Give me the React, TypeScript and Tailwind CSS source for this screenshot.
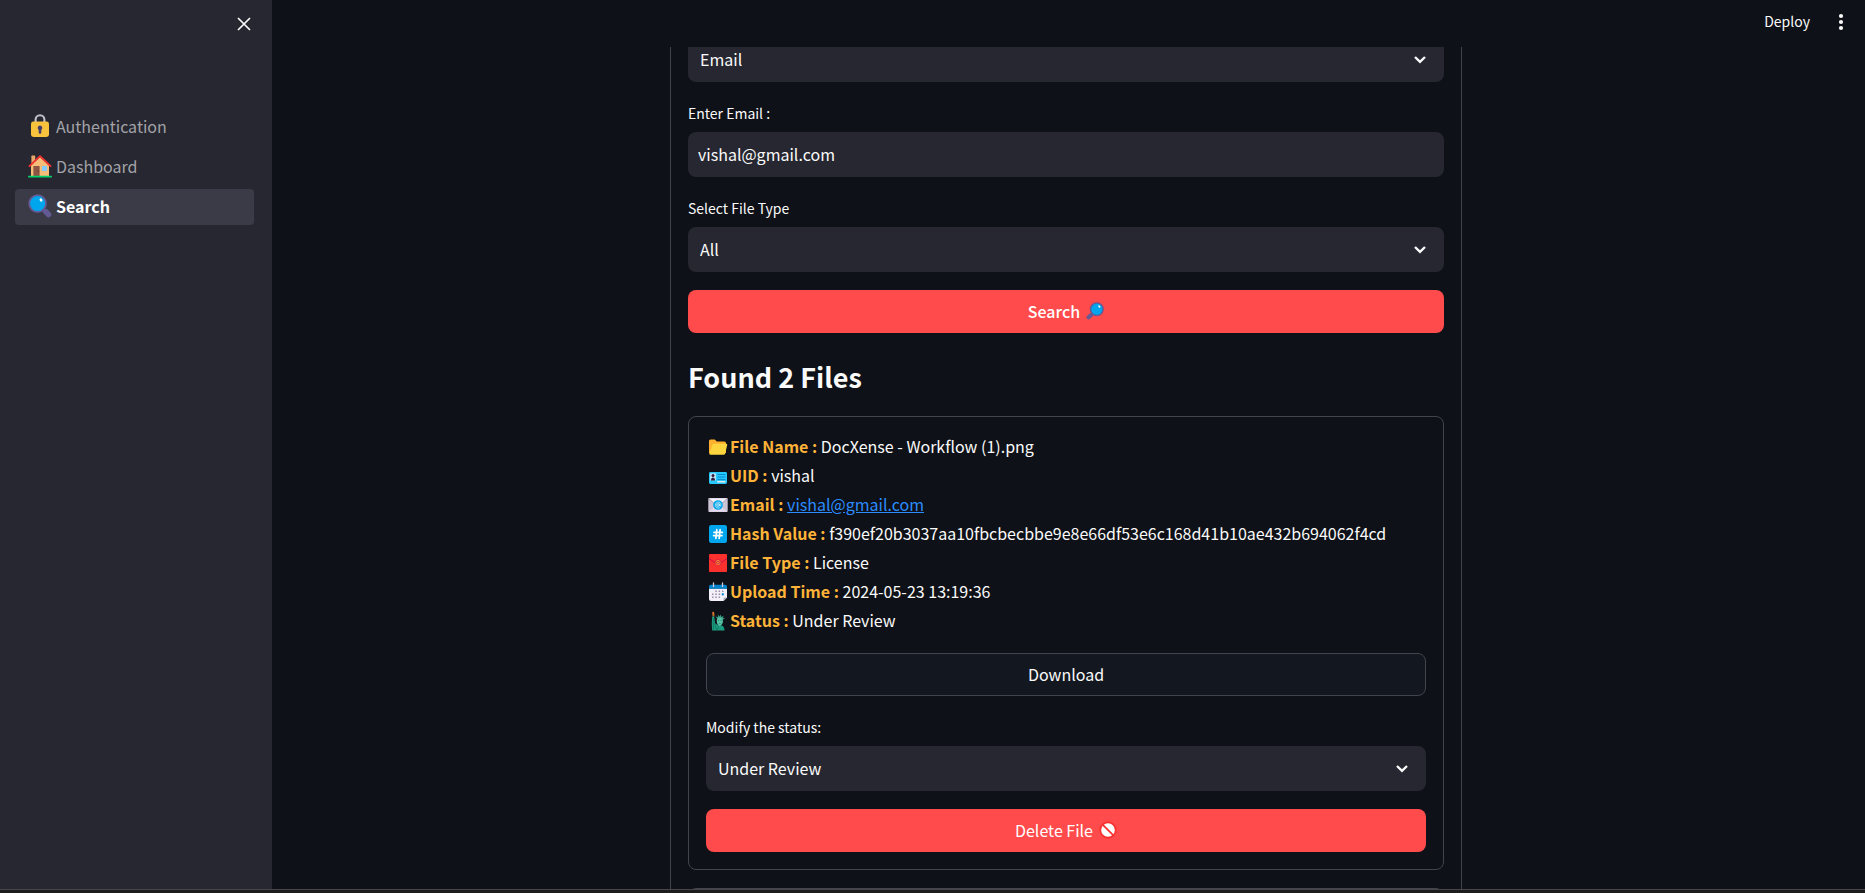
import React, { type ReactNode } from "react";

type IconProps = { className?: string };

function LockIcon({ className }: IconProps) {
  return (
    <svg viewBox="0 0 22 24" className={className} aria-hidden="true">
      <path d="M6.6 10V5.600a4.4 4.4 0 0 1 8.8 0v4.400" fill="none" stroke="#c3c0cb" strokeWidth="2.1" />
      <rect x="2" y="7.5" width="18" height="15.5" rx="2.4" fill="#f9c23c" />
      <path d="M11 11.6a2.3 2.3 0 0 1 1.3 4.2v2.6a1.3 1.3 0 0 1-2.6 0v-2.6A2.3 2.3 0 0 1 11 11.6Z" fill="#433b6b" />
    </svg>
  );
}

function HouseIcon({ className }: IconProps) {
  return (
    <svg viewBox="0 0 24 24" className={className} aria-hidden="true">
      <path d="M3.400 2.2Q3.400 1.4 4.200 1.4H6.400q.8 0 .8.8V9H3.400Z" fill="#e8a96b" />
      <path d="M3 11.5 12 3l9 8.5V22H3Z" fill="#f5bd78" />
      <rect x="5.4" y="12" width="6.2" height="10" fill="#8c5543" />
      <circle cx="10.4" cy="17" r=".6" fill="#4a2b28" />
      <rect x="14" y="12" width="5" height="5" rx=".6" fill="#83cbff" />
      <path d="m1.4 12.2 10.6-10 10.6 10" fill="none" stroke="#f3312f" strokeWidth="1.8" strokeLinecap="round" strokeLinejoin="round" />
      <rect x="0" y="21.8" width="24" height="1.7" rx=".8" fill="#00d26a" />
    </svg>
  );
}

function LensIcon({ className }: IconProps) {
  return (
    <svg viewBox="0 0 24 24" className={className} aria-hidden="true">
      <path d="m14.6 14.6 2.2 2.2" stroke="#533566" strokeWidth="2.4" />
      <path d="m17.6 17.6 2.9 2.9" stroke="#635994" strokeWidth="5.6" strokeLinecap="round" />
      <circle cx="9.6" cy="9.6" r="8.4" fill="#00a6ed" stroke="#635994" strokeWidth="1.8" />
      <ellipse cx="13" cy="6" rx="1.3" ry="1.7" fill="#fff" transform="rotate(-35 13 6)" />
    </svg>
  );
}

function LensRightIcon({ className }: IconProps) {
  return (
    <svg viewBox="0 0 24 24" className={className} aria-hidden="true">
      <path d="m9.4 14.6-2.2 2.2" stroke="#533566" strokeWidth="2.4" />
      <path d="m6.4 17.6-2.9 2.9" stroke="#635994" strokeWidth="5.6" strokeLinecap="round" />
      <circle cx="14.4" cy="9.6" r="8.4" fill="#00a6ed" stroke="#635994" strokeWidth="1.8" />
      <ellipse cx="17.8" cy="6" rx="1.3" ry="1.7" fill="#fff" transform="rotate(-35 17.8 6)" />
    </svg>
  );
}

function FolderIcon({ className }: IconProps) {
  return (
    <svg viewBox="0 0 20 20" className={className} aria-hidden="true">
      <path d="M1 4q0-1.6 1.6-1.6h4.2l2 2h7.6Q18 4.400 18 6v10H1Z" fill="#ffb02e" />
      <path d="M2.6 17.8q-1.600 0-1.200-1.300L4.300 8q.4-1.200 1.700-1.200h12.200q1.300 0 1 1.200l-2 8.500q-.3 1.300-1.600 1.300Z" fill="#fcd53f" />
    </svg>
  );
}

function IdIcon({ className }: IconProps) {
  return (
    <svg viewBox="0 0 20 20" className={className} aria-hidden="true">
      <rect x="1" y="6" width="18" height="12" rx="1.4" fill="#26c9fc" />
      <rect x="2.200" y="7.400" width="5.600" height="7" fill="#d3e9f5" />
      <circle cx="5" cy="9.600" r="1.500" fill="#321b41" />
      <path d="M3 14.400q0-3 2-3t2 3Z" fill="#321b41" />
      <path d="M9.500 8.500h8M9.500 11h8M9.500 13.400h8" stroke="#0084ce" strokeWidth=".9" />
      <rect x="9" y="15" width="8.500" height="1.400" rx=".7" fill="#e6e6e6" />
    </svg>
  );
}

function MailIcon({ className }: IconProps) {
  return (
    <svg viewBox="0 0 20 20" className={className} aria-hidden="true">
      <rect x=".3" y="3" width="19.400" height="14" rx="1" fill="#cdc4d6" />
      <path d="M.8 16.800 8 10.500h4l7.200 6.300Z" fill="#e1d8ec" />
      <path d="M.6 3.400 10 12l9.400-8.600Z" fill="#f4f0fa" />
      <path d="m.8 3.600 6 5.400M19.200 3.600l-6 5.400" stroke="#998ea4" strokeWidth=".8" />
      <circle cx="10" cy="10" r="4.800" fill="#00a6ed" />
      <circle cx="10" cy="10" r="1.300" fill="none" stroke="#e9f6fd" strokeWidth=".8" />
      <path d="M11.400 8.500v2q.2 1.200 1.300.4.900-2.500-1.100-3.600-2.200-.8-3.800 1.100-1.100 2.100.4 3.900 1.600 1.300 3.500.5" fill="none" stroke="#e9f6fd" strokeWidth=".7" />
    </svg>
  );
}

function HashIcon({ className }: IconProps) {
  return (
    <svg viewBox="0 0 20 20" className={className} aria-hidden="true">
      <rect x="1" y="1" width="18" height="18" rx="2.200" fill="#00a6ed" />
      <path d="M8.800 5.700 7.900 14.300M12.100 5.700l-.9 8.600M6 8.400h8.400M5.600 11.600h8.400" stroke="#fff" strokeWidth="1.700" strokeLinecap="round" />
    </svg>
  );
}

function EnvelopeIcon({ className }: IconProps) {
  return (
    <svg viewBox="0 0 20 20" className={className} aria-hidden="true">
      <rect x="1" y="1" width="18" height="18" rx=".8" fill="#f8312f" />
      <path d="M1.200 5.500 10 12l8.800-6.500" fill="none" stroke="#ca0b4a" strokeWidth="1" />
      <circle cx="10" cy="9.600" r="3" fill="#ca0b4a" />
      <circle cx="10" cy="9.600" r="2.200" fill="none" stroke="#ffb02e" strokeWidth=".8" />
      <path d="M8.800 9.600h2.400M10 8.400v2.400" stroke="#ffb02e" strokeWidth=".7" />
    </svg>
  );
}

function CalendarIcon({ className }: IconProps) {
  return (
    <svg viewBox="0 0 20 20" className={className} aria-hidden="true">
      <path d="M1 6.500h18v9L15.500 19H3q-2 0-2-2Z" fill="#f4f0fa" />
      <path d="M19 15.500 15.500 19v-2.300q0-1.200 1.200-1.200Z" fill="#b4acbc" />
      <path d="M1 6.800V4.600q0-1.800 1.800-1.800h14.400q1.800 0 1.800 1.800v2.200Z" fill="#0084ce" />
      <path d="M5.500 1v3.600M14.500 1v3.600" stroke="#d3cbdd" strokeWidth="1.300" strokeLinecap="round" />
      <g fill="#998ea4">
        <rect x="7.300" y="8.500" width="1.500" height="1.500" />
        <rect x="10.600" y="8.500" width="1.500" height="1.500" />
        <rect x="14" y="8.500" width="1.500" height="1.500" />
        <rect x="4" y="11.500" width="1.500" height="1.500" />
        <rect x="7.300" y="11.500" width="1.500" height="1.500" />
        <rect x="10.600" y="11.500" width="1.500" height="1.500" />
        <rect x="4" y="14.500" width="1.500" height="1.500" />
        <rect x="7.300" y="14.500" width="1.500" height="1.500" />
        <rect x="10.600" y="14.500" width="1.500" height="1.500" />
      </g>
      <rect x="13.800" y="11.300" width="2" height="2" fill="#0084ce" />
    </svg>
  );
}

function LibertyIcon({ className }: IconProps) {
  return (
    <svg viewBox="0 0 20 20" className={className} aria-hidden="true">
      <path d="M4.600 3.200Q3.700 1.600 5 .4q1.800 1.200 1.200 2.800Z" fill="#ff822d" />
      <path d="M4 3.200h2.800l-.6 2.400H4.700Z" fill="#b97028" />
      <path d="M4.200 5.600h2l.9 6.600 3.200 2.200 3.300.1q2.700.6 3 4.900H4.200q-.9-6 0-13.800Z" fill="#1a9c80" />
      <path d="m9 7.400-1.600-2.200 2.500 1-.1-2.600 1.700 2 1.300-2.100.5 2.400 2.500-1.200-1 2.300 2.300.2-2 1.400Z" fill="#359b86" />
      <path d="M9 7.800q2.800-2.800 5.600 0 .8 3.200-.3 5-1.300 2.200-2.700 2.200t-2.400-2.200Q8.300 10.600 9 7.800Z" fill="#55c0a4" />
      <path d="M10.200 9.500h1M12.600 9.500h1M11.200 12.500h1.400" stroke="#13735c" strokeWidth=".7" />
      <path d="M6.600 12.500 8.800 19M10.400 15.500 9.600 19M5.400 8v10" fill="none" stroke="#13735c" strokeWidth=".8" />
    </svg>
  );
}

function ProhibitedIcon({ className }: IconProps) {
  return (
    <svg viewBox="0 0 20 20" className={className} aria-hidden="true">
      <circle cx="10" cy="10" r="8.600" fill="#fff" stroke="#f8312f" strokeWidth="2" />
      <path d="m4 4 12 12" stroke="#f8312f" strokeWidth="2" />
    </svg>
  );
}

function ChevronIcon() {
  return (
    <svg
      viewBox="0 0 24 24"
      className="pointer-events-none absolute top-1/2 right-3 size-6 -translate-y-1/2"
      aria-hidden="true"
    >
      <path d="m7 9 5 4.900L17 9" fill="none" stroke="#fafafa" strokeWidth="2.400" />
    </svg>
  );
}

const fieldClass =
  "block h-[45px] w-full appearance-none rounded-lg bg-[#262730] pb-0.5 text-base text-[#fafafa] outline-none";

const buttonClass = "flex h-[43px] w-full items-center justify-center gap-1.5 rounded-lg pb-0.5";

function SelectBox({ id, label, options }: { id?: string; label?: string; options: string[] }) {
  return (
    <div className="relative">
      <select id={id} aria-label={label} className={`${fieldClass} px-3`}>
        {options.map((option) => (
          <option key={option}>{option}</option>
        ))}
      </select>
      <ChevronIcon />
    </div>
  );
}

function FieldLabel({ htmlFor, children }: { htmlFor: string; children: ReactNode }) {
  return (
    <label htmlFor={htmlFor} className="mb-1.5 block text-sm leading-[26px]">
      {children}
    </label>
  );
}

function NavItem({ icon, label, active }: { icon: ReactNode; label: string; active?: boolean }) {
  return (
    <li>
      <a
        href="#"
        aria-current={active ? "page" : undefined}
        className={
          active
            ? "flex h-9 items-center gap-1 rounded bg-[#3b3b47] px-[13px] pb-0.5 font-bold text-white"
            : "flex h-9 items-center gap-1 rounded px-[13px] pb-0.5 text-[#a3a3a8]"
        }
      >
        {icon}
        <span>{label}</span>
      </a>
    </li>
  );
}

function Detail({ icon, name, children }: { icon: ReactNode; name: string; children: ReactNode }) {
  return (
    <li className="flex items-center gap-0.5 leading-[29px]">
      {icon}
      <span>
        <strong className="font-bold text-[#ffb338]">{name} :</strong> {children}
      </span>
    </li>
  );
}

const iconSize = "ml-0.5 size-5 shrink-0";

export default function App() {
  return (
    <div className="flex h-screen flex-col bg-[#0e1117] font-['Noto_Sans_CJK_SC','Source_Sans_Pro',sans-serif] text-base text-[#fafafa]">
      <div className="flex min-h-0 flex-1">
        <aside className="w-[272px] shrink-0 bg-[#262730] pr-[18px] pl-[15px]">
          <div className="flex h-12 items-center justify-end">
            <button type="button" aria-label="Close" className="flex size-5 items-center justify-center">
              <svg viewBox="0 0 14 14" className="size-3.5" aria-hidden="true">
                <path d="m1 1 12 12M13 1 1 13" stroke="#fafafa" strokeWidth="1.700" />
              </svg>
            </button>
          </div>
          <nav className="pt-[61px]">
            <ul className="flex flex-col gap-1">
              <NavItem icon={<LockIcon className="size-6" />} label="Authentication" />
              <NavItem icon={<HouseIcon className="size-6" />} label="Dashboard" />
              <NavItem icon={<LensIcon className="size-6" />} label="Search" active />
            </ul>
          </nav>
        </aside>

        <div className="flex min-w-0 flex-1 flex-col">
          <header className="flex h-[47px] shrink-0 items-start justify-end gap-[19px] pt-2.5 pr-3">
            <button type="button" className="text-sm leading-[22px]">
              Deploy
            </button>
            <button type="button" aria-label="Menu" className="flex size-6 items-center justify-center">
              <svg viewBox="0 0 24 24" className="size-6" fill="#fafafa" aria-hidden="true">
                <circle cx="12" cy="6" r="2.100" />
                <circle cx="12" cy="12" r="2.100" />
                <circle cx="12" cy="18" r="2.100" />
              </svg>
            </button>
          </header>

          <main className="min-h-0 flex-1 overflow-hidden pr-[5px]">
            <div className="mx-auto w-full max-w-[792px] border-x border-[#41444c] px-[17px]">
              <form className="-mt-2.5" onSubmit={(event) => event.preventDefault()}>
                <SelectBox label="Email" options={["Email"]} />
                <div className="mt-[18px]">
                  <FieldLabel htmlFor="email">Enter Email :</FieldLabel>
                  <input id="email" type="text" defaultValue="vishal@gmail.com" className={`${fieldClass} px-2.5`} />
                </div>
                <div className="mt-[18px]">
                  <FieldLabel htmlFor="file-type">Select File Type</FieldLabel>
                  <SelectBox id="file-type" options={["All"]} />
                </div>
                <button type="submit" className={`${buttonClass} mt-[18px] bg-[#ff4b4b] font-medium text-white`}>
                  Search
                  <LensRightIcon className="size-[18px]" />
                </button>
              </form>

              <h2 className="pt-6 pb-[19px] text-[27px] leading-10 font-bold">Found 2 Files</h2>

              <section className="rounded-lg border border-[#41444c] px-[17px] pt-[15px] pb-[17px]">
                <ul>
                  <Detail icon={<FolderIcon className={iconSize} />} name="File Name">
                    DocXense - Workflow (1).png
                  </Detail>
                  <Detail icon={<IdIcon className={iconSize} />} name="UID">
                    vishal
                  </Detail>
                  <Detail icon={<MailIcon className={iconSize} />} name="Email">
                    <a href="mailto:vishal@gmail.com" className="text-[#2b8cff] underline">
                      vishal@gmail.com
                    </a>
                  </Detail>
                  <Detail icon={<HashIcon className={iconSize} />} name="Hash Value">
                    f390ef20b3037aa10fbcbecbbe9e8e66df53e6c168d41b10ae432b694062f4cd
                  </Detail>
                  <Detail icon={<EnvelopeIcon className={iconSize} />} name="File Type">
                    License
                  </Detail>
                  <Detail icon={<CalendarIcon className={iconSize} />} name="Upload Time">
                    2024-05-23 13:19:36
                  </Detail>
                  <Detail icon={<LibertyIcon className={iconSize} />} name="Status">
                    Under Review
                  </Detail>
                </ul>
                <button type="button" className={`${buttonClass} mt-[18px] border border-[#41444c] bg-[#131720]`}>
                  Download
                </button>
                <div className="mt-[18px]">
                  <FieldLabel htmlFor="status">Modify the status:</FieldLabel>
                  <SelectBox id="status" options={["Under Review"]} />
                </div>
                <button type="button" className={`${buttonClass} mt-[18px] bg-[#ff4b4b] text-white`}>
                  Delete File
                  <ProhibitedIcon className="size-[18px]" />
                </button>
              </section>

              <section className="mt-[18px] h-24 rounded-lg border border-[#41444c]" />
            </div>
          </main>
        </div>
      </div>
      <footer className="h-1 shrink-0 border-t border-[#46464a] bg-[#1d1d1d]" />
    </div>
  );
}
